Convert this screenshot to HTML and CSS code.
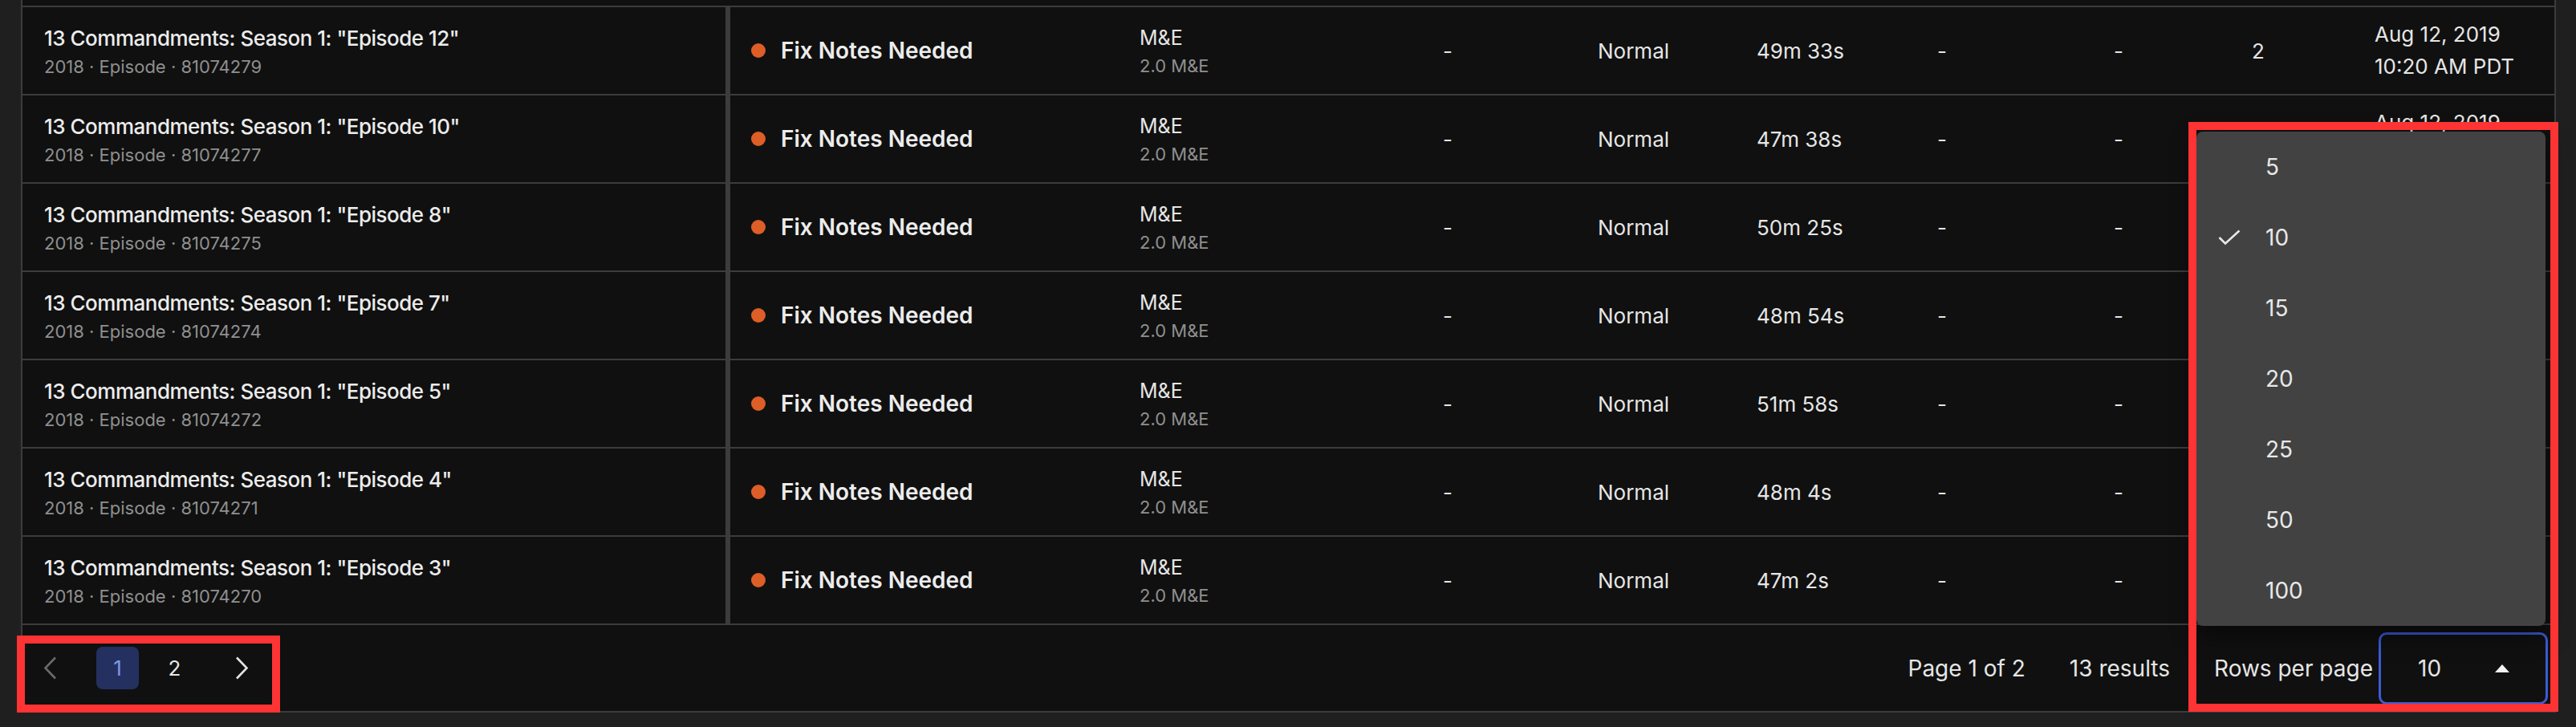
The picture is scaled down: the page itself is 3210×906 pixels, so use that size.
FILE: index.html
```html
<!DOCTYPE html>
<html>
<head>
  <meta charset="UTF-8">
  <title>Deliveries</title>
  <link rel="stylesheet" href="styles.css">
</head>
<body>
  <div class="table">
    <div class="tail"></div>

    <div class="row">
      <div class="cell name"><div class="title">13 Commandments: Season 1: "Episode 12"</div><div class="meta">2018 · Episode · 81074279</div></div>
      <div class="cell status"><span class="dot"></span>Fix Notes Needed</div>
      <div class="cell"><div class="main">M&amp;E</div><div class="meta">2.0 M&amp;E</div></div>
      <div class="cell">-</div>
      <div class="cell">Normal</div>
      <div class="cell">49m 33s</div>
      <div class="cell">-</div>
      <div class="cell">-</div>
      <div class="cell">2</div>
      <div class="cell date">Aug 12, 2019<br>10:20 AM PDT</div>
    </div>

    <div class="row">
      <div class="cell name"><div class="title">13 Commandments: Season 1: "Episode 10"</div><div class="meta">2018 · Episode · 81074277</div></div>
      <div class="cell status"><span class="dot"></span>Fix Notes Needed</div>
      <div class="cell"><div class="main">M&amp;E</div><div class="meta">2.0 M&amp;E</div></div>
      <div class="cell">-</div>
      <div class="cell">Normal</div>
      <div class="cell">47m 38s</div>
      <div class="cell">-</div>
      <div class="cell">-</div>
      <div class="cell">2</div>
      <div class="cell date">Aug 12, 2019<br>10:20 AM PDT</div>
    </div>

    <div class="row">
      <div class="cell name"><div class="title">13 Commandments: Season 1: "Episode 8"</div><div class="meta">2018 · Episode · 81074275</div></div>
      <div class="cell status"><span class="dot"></span>Fix Notes Needed</div>
      <div class="cell"><div class="main">M&amp;E</div><div class="meta">2.0 M&amp;E</div></div>
      <div class="cell">-</div>
      <div class="cell">Normal</div>
      <div class="cell">50m 25s</div>
      <div class="cell">-</div>
      <div class="cell">-</div>
      <div class="cell">2</div>
      <div class="cell date">Aug 12, 2019<br>10:20 AM PDT</div>
    </div>

    <div class="row">
      <div class="cell name"><div class="title">13 Commandments: Season 1: "Episode 7"</div><div class="meta">2018 · Episode · 81074274</div></div>
      <div class="cell status"><span class="dot"></span>Fix Notes Needed</div>
      <div class="cell"><div class="main">M&amp;E</div><div class="meta">2.0 M&amp;E</div></div>
      <div class="cell">-</div>
      <div class="cell">Normal</div>
      <div class="cell">48m 54s</div>
      <div class="cell">-</div>
      <div class="cell">-</div>
      <div class="cell">2</div>
      <div class="cell date">Aug 12, 2019<br>10:20 AM PDT</div>
    </div>

    <div class="row">
      <div class="cell name"><div class="title">13 Commandments: Season 1: "Episode 5"</div><div class="meta">2018 · Episode · 81074272</div></div>
      <div class="cell status"><span class="dot"></span>Fix Notes Needed</div>
      <div class="cell"><div class="main">M&amp;E</div><div class="meta">2.0 M&amp;E</div></div>
      <div class="cell">-</div>
      <div class="cell">Normal</div>
      <div class="cell">51m 58s</div>
      <div class="cell">-</div>
      <div class="cell">-</div>
      <div class="cell">2</div>
      <div class="cell date">Aug 12, 2019<br>10:20 AM PDT</div>
    </div>

    <div class="row">
      <div class="cell name"><div class="title">13 Commandments: Season 1: "Episode 4"</div><div class="meta">2018 · Episode · 81074271</div></div>
      <div class="cell status"><span class="dot"></span>Fix Notes Needed</div>
      <div class="cell"><div class="main">M&amp;E</div><div class="meta">2.0 M&amp;E</div></div>
      <div class="cell">-</div>
      <div class="cell">Normal</div>
      <div class="cell">48m 4s</div>
      <div class="cell">-</div>
      <div class="cell">-</div>
      <div class="cell">2</div>
      <div class="cell date">Aug 12, 2019<br>10:20 AM PDT</div>
    </div>

    <div class="row">
      <div class="cell name"><div class="title">13 Commandments: Season 1: "Episode 3"</div><div class="meta">2018 · Episode · 81074270</div></div>
      <div class="cell status"><span class="dot"></span>Fix Notes Needed</div>
      <div class="cell"><div class="main">M&amp;E</div><div class="meta">2.0 M&amp;E</div></div>
      <div class="cell">-</div>
      <div class="cell">Normal</div>
      <div class="cell">47m 2s</div>
      <div class="cell">-</div>
      <div class="cell">-</div>
      <div class="cell">2</div>
      <div class="cell date">Aug 12, 2019<br>10:20 AM PDT</div>
    </div>

    <div class="footer">
      <div class="pager">
        <span class="pageBtn arrow prev">
          <svg width="17" height="29" viewBox="0 0 17 29"><polyline points="15,1.5 2.5,14.5 15,27.5" fill="none" stroke="#6b6b6b" stroke-width="2.6"/></svg>
        </span>
        <span class="pageBtn current">1</span>
        <span class="pageBtn">2</span>
        <span class="pageBtn arrow next">
          <svg width="17" height="29" viewBox="0 0 17 29"><polyline points="2,1.5 14.5,14.5 2,27.5" fill="none" stroke="#e4e4e4" stroke-width="2.6"/></svg>
        </span>
      </div>
      <div class="summary">
        <span class="pageInfo">Page 1 of 2</span>
        <span class="results">13 results</span>
        <span class="rowsLabel">Rows per page</span>
        <div class="rowsSelect">
          <span>10</span>
          <span class="caret"></span>
          <div class="menu">
            <div class="menuItem"><span class="checkSlot"></span>5</div>
            <div class="menuItem"><span class="checkSlot"><svg width="28" height="20" viewBox="0 0 28 20"><polyline points="1.5,10 9,17.5 26.5,1.5" fill="none" stroke="#e8e8e8" stroke-width="2.6"/></svg></span>10</div>
            <div class="menuItem"><span class="checkSlot"></span>15</div>
            <div class="menuItem"><span class="checkSlot"></span>20</div>
            <div class="menuItem"><span class="checkSlot"></span>25</div>
            <div class="menuItem"><span class="checkSlot"></span>50</div>
            <div class="menuItem"><span class="checkSlot"></span>100</div>
          </div>
        </div>
      </div>
    </div>
  </div>

  <!-- review marks -->
  <div class="mark markPager"></div>
  <div class="mark markRows"></div>
</body>
</html>
```

FILE: styles.css
```css
body {
  margin: 0;
  width: 3210px;
  height: 906px;
  overflow: hidden;
  position: relative;
  background: #1f1f1f;
  color: #e6e6e6;
  font-family: Inter, "Noto Sans", sans-serif;
}
.table {
  margin-left: 26px;
  width: 3159px;
  box-sizing: border-box;
  border-left: 2px solid #3c3c3c;
  border-right: 2px solid #3c3c3c;
  background: #101010;
}
.tail {
  height: 7px;
}
.row {
  display: grid;
  grid-template-columns: 882px 510px 378px 193px 198px 225px 220px 172px 153px 1fr;
  height: 108px;
  border-top: 2px solid #3c3c3c;
  align-items: center;
  font-size: 26px;
}
.cell {
  white-space: nowrap;
}
.cell.name {
  align-self: stretch;
  display: flex;
  flex-direction: column;
  justify-content: center;
  padding-left: 27px;
  padding-top: 2px;
  border-right: 6px solid #3c3c3c;
}
.title {
  font-size: 26px;
  font-weight: 500;
  letter-spacing: -0.5px;
  line-height: 36px;
  color: #ececec;
}
.main {
  font-size: 25px;
  line-height: 36px;
}
.meta {
  font-size: 22px;
  line-height: 30px;
  margin-top: 2px;
  color: #8f8f8f;
}
.status {
  display: flex;
  align-items: center;
  padding-left: 26px;
  font-size: 28px;
  font-weight: 600;
  color: #ececec;
}
.dot {
  width: 18px;
  height: 18px;
  border-radius: 9px;
  background: #dd5e26;
  margin-right: 19px;
}
.date {
  line-height: 40px;
}
.footer {
  height: 107px;
  border-top: 2px solid #3c3c3c;
  border-bottom: 2px solid #3c3c3c;
  padding: 0 8px;
  display: flex;
  align-items: center;
  justify-content: space-between;
  font-size: 28px;
}
.pager {
  display: flex;
  align-items: center;
}
.pageBtn {
  width: 53px;
  height: 53px;
  border-radius: 8px;
  display: flex;
  align-items: center;
  justify-content: center;
  font-size: 26px;
  margin-right: 18px;
}
.pageBtn.prev {
  margin-right: 31px;
}
.pageBtn.next {
  margin-left: 13px;
  margin-right: 0;
}
.pageBtn.current {
  background: #24305f;
  color: #8196e8;
}
.summary {
  display: flex;
  align-items: center;
}
.pageInfo,
.results {
  margin-right: 55px;
}
.rowsLabel {
  margin-right: 7px;
}
.rowsSelect {
  position: relative;
  width: 211px;
  height: 90px;
  box-sizing: border-box;
  border: 3px solid #3d5bd6;
  border-radius: 10px;
  padding: 0 45px 0 46px;
  display: flex;
  align-items: center;
  justify-content: space-between;
  font-size: 28px;
}
.caret {
  width: 0;
  height: 0;
  border-left: 9px solid transparent;
  border-right: 9px solid transparent;
  border-bottom: 10px solid #f2f2f2;
}
.menu {
  position: absolute;
  right: 0;
  bottom: calc(100% + 11px);
  width: 435px;
  background: #424242;
  border-radius: 8px;
  box-shadow: 0 10px 30px rgba(0, 0, 0, 0.55);
}
.menuItem {
  height: 88px;
  display: flex;
  align-items: center;
  padding-left: 27px;
  font-size: 28px;
  color: #e8e8e8;
}
.checkSlot {
  width: 59px;
  display: flex;
  align-items: center;
}
.mark {
  position: absolute;
  box-sizing: border-box;
  border: 10px solid #fe3333;
}
.markPager {
  left: 21px;
  top: 792px;
  width: 328px;
  height: 96px;
}
.markRows {
  left: 2727px;
  top: 152px;
  width: 461px;
  height: 735px;
}
```
